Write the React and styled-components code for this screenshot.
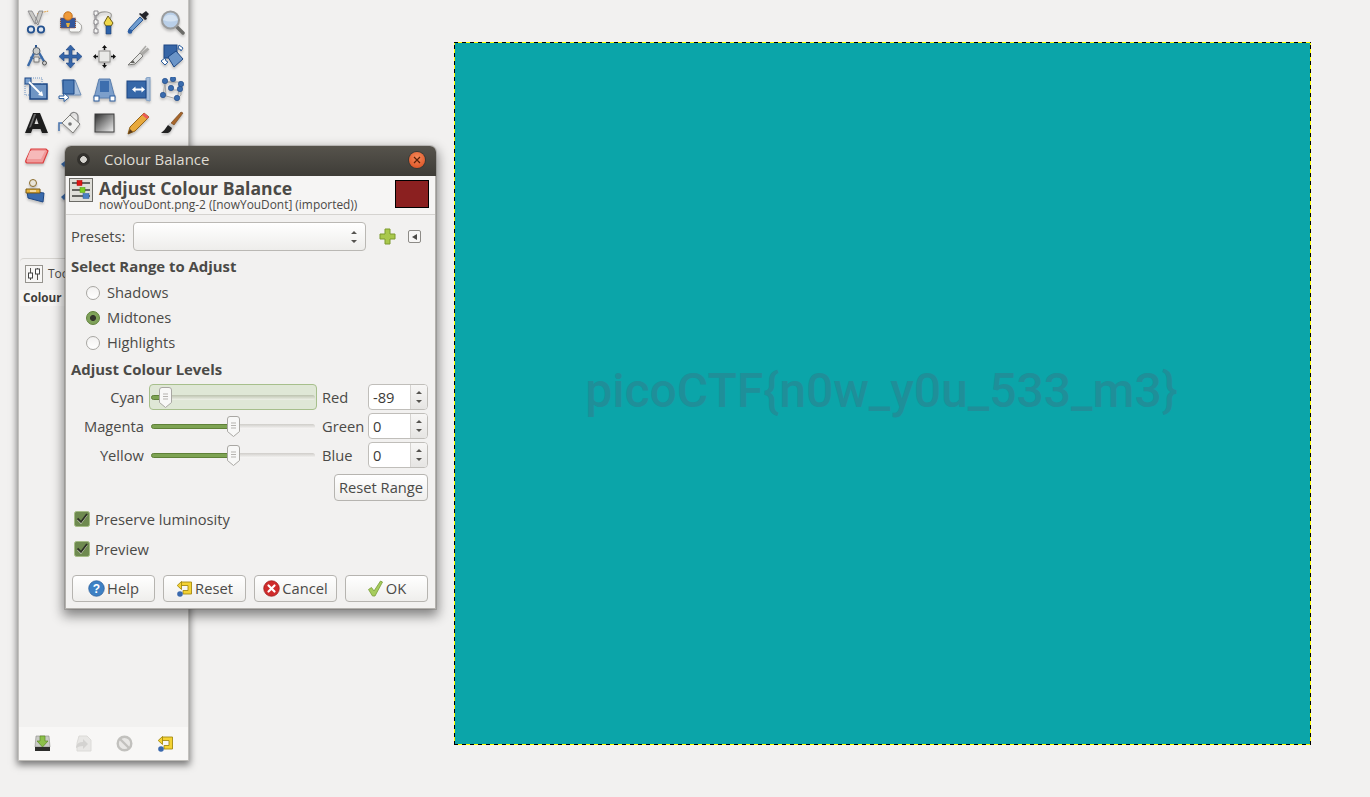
import React from 'react';
import styled, { createGlobalStyle } from 'styled-components';

const Global = createGlobalStyle`
  html, body { margin: 0; padding: 0; height: 100%; overflow: hidden; background: #f2f1f0; }
  #root { position: relative; width: 1370px; height: 797px; overflow: hidden; font-family: "Open Sans", "Noto Sans", sans-serif; color: #4b4a47; }
`;

const Desktop = styled.div`
  position: relative;
  width: 1370px;
  height: 797px;
  background: #f2f1f0;
`;

const Canvas = styled.div`
  position: absolute;
  left: 454px;
  top: 42px;
  width: 857px;
  height: 703px;
  display: flex;
  align-items: center;
  justify-content: center;
  background:
    repeating-linear-gradient(90deg, #000 0 4px, #ff0 4px 8px) top left / 100% 1px no-repeat,
    repeating-linear-gradient(90deg, #000 0 4px, #ff0 4px 8px) bottom left / 100% 1px no-repeat,
    repeating-linear-gradient(0deg, #000 0 4px, #ff0 4px 8px) top left / 1px 100% no-repeat,
    repeating-linear-gradient(0deg, #000 0 4px, #ff0 4px 8px) top right / 1px 100% no-repeat,
    #0ba5a9;
`;

const Flag = styled.div`
  font-family: Roboto, "Liberation Sans", sans-serif;
  font-size: 48px;
  font-weight: 500;
  color: #1f8f99;
  white-space: nowrap;
  margin: 0 0 6px -2px;
`;

/* ---------- Toolbox ---------- */
const Toolbox = styled.div`
  position: absolute;
  left: 18px;
  top: -10px;
  width: 171px;
  height: 771px;
  display: flex;
  flex-direction: column;
  background: #f2f1f0;
  border-left: 1px solid #c4c2bf;
  border-right: 1px solid #c4c2bf;
  border-bottom: 1px solid #bdbbb7;
  box-sizing: border-box;
  box-shadow: 0 3px 7px 1px rgba(0, 0, 0, 0.5);
`;

const ToolGrid = styled.div`
  display: grid;
  grid-template-columns: repeat(5, 34px);
  grid-auto-rows: 33.6px;
  padding-top: 16px;
  height: 268px;
  box-sizing: border-box;
`;

const ToolCell = styled.div`
  display: flex;
  align-items: center;
  justify-content: center;
  svg {
    width: 25px;
    height: 25px;
    display: block;
    filter: drop-shadow(0 2px 1px rgba(0, 0, 0, 0.2));
  }
`;

const TabPanel = styled.div`
  flex: 1;
  display: flex;
  flex-direction: column;
  margin-left: 1px;
  background: #f2f1f0;
`;

const Tab = styled.div`
  height: 32px;
  display: flex;
  align-items: center;
  gap: 5px;
  padding: 0 5px 2px;
  box-sizing: border-box;
  border-top: 1px solid #d5d3cf;
  border-top-left-radius: 4px;
  font-size: 12px;
  white-space: nowrap;
  overflow: hidden;
`;

const TabIcon = styled.div`
  width: 18px;
  height: 18px;
  flex: none;
  svg { width: 18px; height: 18px; display: block; }
`;

const PanelTitle = styled.div`
  height: 16px;
  line-height: 15px;
  padding-left: 3px;
  font-size: 11.7px;
  font-weight: 700;
  white-space: nowrap;
  background: #f7f6f5;
  color: #3f3e3b;
`;

const PanelFill = styled.div`
  flex: 1;
`;

const BottomBar = styled.div`
  height: 33px;
  display: grid;
  grid-template-columns: repeat(4, 41px);
  padding-left: 3px;
  align-items: center;
  justify-items: center;
  background: #f8f7f6;
  svg { width: 17px; height: 17px; display: block; }
`;

/* ---------- Dialog ---------- */
const Dialog = styled.div`
  position: absolute;
  left: 65px;
  top: 146px;
  width: 371px;
  height: 463px;
  box-sizing: border-box;
  display: flex;
  flex-direction: column;
  background: #f2f1f0;
  border-radius: 6px 6px 0 0;
  box-shadow: 0 0 0 1px rgba(90, 88, 84, 0.25), 0 5px 12px 2px rgba(0, 0, 0, 0.45);
`;

const TitleBar = styled.div`
  height: 30px;
  flex: none;
  box-sizing: border-box;
  display: flex;
  align-items: center;
  padding: 0 11px 3px 12px;
  border-radius: 6px 6px 0 0;
  background: linear-gradient(#56534c, #3e3c37);
`;

const WindowDot = styled.span`
  width: 13px;
  height: 13px;
  border-radius: 50%;
  background: radial-gradient(circle, #d5d3ce 0 3px, #33312d 3.6px 100%);
`;

const WindowTitle = styled.span`
  margin: 0 0 2px 14px;
  flex: 1;
  font-size: 15px;
  color: #dfdbd2;
`;

const CloseButton = styled.span`
  width: 16px;
  height: 16px;
  border-radius: 50%;
  background: radial-gradient(circle at 50% 35%, #f58a5a, #d94a1c);
  box-shadow: 0 0 0 1px #3a3833;
  display: flex;
  align-items: center;
  justify-content: center;
  svg { width: 8px; height: 8px; display: block; }
`;

const Inner = styled.div`
  flex: 1;
  display: flex;
  flex-direction: column;
  border: solid #b3b1ad;
  border-width: 0 1px 1px;
`;

const Header = styled.div`
  height: 39px;
  flex: none;
  box-sizing: border-box;
  display: grid;
  grid-template-columns: 24px 1fr 34px;
  column-gap: 6px;
  padding: 2px 6px 0 3px;
  background: #f6f5f4;
  border-bottom: 1px solid #d5d3d0;
`;

const HeaderIcon = styled.div`
  svg { width: 24px; height: 24px; display: block; }
`;

const HeaderText = styled.div`
  display: flex;
  flex-direction: column;
`;

const HeaderTitle = styled.div`
  font-size: 17.6px;
  line-height: 20px;
  font-weight: 700;
  color: #4b4a47;
  white-space: nowrap;
`;

const HeaderSub = styled.div`
  font-size: 11.9px;
  line-height: 13px;
  white-space: nowrap;
`;

const Swatch = styled.div`
  height: 28px;
  margin-top: 2px;
  box-sizing: border-box;
  background: #8b2020;
  border: 1px solid #000;
`;

const Body = styled.div`
  flex: 1;
  display: flex;
  flex-direction: column;
  padding: 7px 7px 6px 5px;
`;

const PresetRow = styled.div`
  height: 29px;
  display: flex;
  align-items: center;
  font-size: 14.7px;
`;

const PresetLabel = styled.span`
  width: 62px;
  margin-bottom: 2px;
`;

const Combo = styled.div`
  width: 233px;
  height: 29px;
  border: 1px solid #bab8b4;
  border-radius: 4px;
  background: linear-gradient(#fff, #eeedeb);
  display: flex;
  align-items: center;
  justify-content: flex-end;
  padding-right: 7px;
  box-sizing: border-box;
  svg { width: 8px; height: 14px; display: block; }
`;

const PlusIcon = styled.div`
  margin-left: 13px;
  svg { width: 17px; height: 17px; display: block; }
`;

const MenuArrow = styled.div`
  margin-left: 12px;
  width: 11px;
  height: 11px;
  border: 1px solid #8d8b87;
  border-radius: 2px;
  background: #f7f6f5;
  display: flex;
  align-items: center;
  justify-content: center;
  &::before {
    content: "";
    border-style: solid;
    border-width: 3px 5px 3px 0;
    border-color: transparent #4b4a47 transparent transparent;
  }
`;

const SectionTitle = styled.div`
  height: 18px;
  line-height: 16px;
  font-size: 14.9px;
  font-weight: 700;
  white-space: nowrap;
  margin-top: ${(p) => p.$top}px;
`;

const RadioList = styled.div`
  display: flex;
  flex-direction: column;
  margin: 4px 0 6px 15px;
`;

const RadioRow = styled.div`
  height: 25px;
  display: flex;
  align-items: center;
  font-size: 14.7px;
`;

const RowLabel = styled.span`
  margin-bottom: 2px;
`;

const RadioMark = styled.span`
  width: 14px;
  height: 14px;
  box-sizing: border-box;
  border-radius: 50%;
  margin-right: 7px;
  flex: none;
  border: 1px solid ${(p) => (p.$on ? '#5f8039' : '#a8a6a2')};
  background: ${(p) =>
    p.$on
      ? 'radial-gradient(circle, #33352c 0 2.6px, #7fa25a 3.4px 100%)'
      : 'linear-gradient(#f2f1f0, #fff)'};
`;

const ScaleGrid = styled.div`
  display: grid;
  grid-template-columns: 73px 168px 41px 60px;
  column-gap: 5px;
  grid-auto-rows: 26px;
  row-gap: 3px;
  margin-top: 5px;
`;

const ScaleRowName = styled.div`
  font-size: 14.7px;
  display: flex;
  align-items: center;
  justify-content: ${(p) => (p.$right ? 'flex-end' : 'flex-start')};
  white-space: nowrap;
`;

const Scale = styled.div`
  position: relative;
  box-sizing: border-box;
  border: 1px solid ${(p) => (p.$focus ? '#a7bf8c' : 'transparent')};
  border-radius: 4px;
  background: ${(p) => (p.$focus ? '#dfe7d6' : 'transparent')};
`;

const Trough = styled.div`
  position: absolute;
  left: 1px;
  right: 1px;
  top: 10px;
  height: 5px;
  border-radius: 3px;
  background: ${(p) => (p.$focus ? 'linear-gradient(#bcc2ae, #eef1e8)' : 'linear-gradient(#cfcdc9, #f8f7f6)')};
`;

const TroughFill = styled.div`
  height: 100%;
  box-sizing: border-box;
  border: 1px solid #5f8138;
  border-radius: 3px 0 0 3px;
  background: #7da352;
`;

const Handle = styled.div`
  position: absolute;
  top: 2px;
  width: 13px;
  height: 21px;
  svg { width: 13px; height: 21px; display: block; }
`;

const Spin = styled.div`
  display: flex;
  box-sizing: border-box;
  border: 1px solid #c0beba;
  border-radius: 4px;
  overflow: hidden;
  background: #fff;
`;

const SpinValue = styled.div`
  flex: 1;
  padding-left: 4px;
  font-size: 14.7px;
  line-height: 24px;
  color: #3c3b38;
`;

const SpinButtons = styled.div`
  width: 16px;
  display: flex;
  flex-direction: column;
  align-items: center;
  justify-content: center;
  gap: 6px;
  background: linear-gradient(#f7f6f5, #e6e5e3);
  border-left: 1px solid #d5d3d0;
`;

const SpinArrow = styled.span`
  border-style: solid;
  border-width: ${(p) => (p.$down ? '3px 3px 0' : '0 3px 3px')};
  border-color: ${(p) =>
    p.$down ? '#55534f transparent transparent' : 'transparent transparent #55534f'};
`;

const ResetRow = styled.div`
  display: flex;
  justify-content: flex-end;
  margin-top: 6px;
`;

const PushButton = styled.div`
  height: 27px;
  width: ${(p) => p.$w}px;
  box-sizing: border-box;
  border: 1px solid #b6b4b0;
  border-radius: 4px;
  background: linear-gradient(#fff, #efeeec);
  display: flex;
  align-items: center;
  justify-content: center;
  gap: 2px;
  font-size: 14.7px;
  white-space: nowrap;
  svg { width: 17px; height: 17px; display: block; flex: none; }
`;

const CheckRow = styled.div`
  height: 20px;
  margin-top: ${(p) => p.$top}px;
  margin-left: 3px;
  display: flex;
  align-items: center;
  font-size: 14.7px;
`;

const CheckMark = styled.div`
  width: 16px;
  height: 16px;
  margin-right: 5px;
  svg { width: 16px; height: 16px; display: block; }
`;

const ActionBar = styled.div`
  display: grid;
  grid-template-columns: repeat(4, 83px);
  column-gap: 8px;
  margin: 16px 0 0 1px;
`;

/* ---------- Icons ---------- */
const Scissors = () => (
  <svg viewBox="0 0 25 25">
    <path d="M13 4Q19 2 25 1" stroke="#d88a1c" strokeDasharray="1.500 1" fill="none" />
    <path d="M4 1l7 13 3-2L8 1zM19 1l-5 14-3-3 4-11z" fill="#c9c9c6" stroke="#77767a" strokeWidth=".7" />
    <circle cx="7" cy="19.500" r="3.200" fill="#dfe6f0" stroke="#23518f" strokeWidth="1.800" />
    <circle cx="17" cy="19.500" r="3.200" fill="#dfe6f0" stroke="#23518f" strokeWidth="1.800" />
  </svg>
);
const Foreground = () => (
  <svg viewBox="0 0 25 25">
    <path d="M14 14q1-4 4-3t4 3q2 0 1.500 4t-3 4H13q-3-1-1-5z" fill="#f7f7f6" stroke="#a9a8a5" />
    <rect x="2.500" y="8" width="15" height="10" fill="#34569b" stroke="#a0522d" strokeDasharray="1 1" />
    <circle cx="10" cy="6" r="4.200" fill="#ef9a3a" stroke="#c26f1c" />
    <path d="M8 13h4l-1 4H9z" fill="#e9b23c" />
  </svg>
);
const PathTool = () => (
  <svg viewBox="0 0 25 25">
    <path d="M5 5Q8 1 15 2t3 7" fill="none" stroke="#9c9b98" strokeWidth="1.200" />
    <path d="M2 1h4v4H4v5h2v4H4v5h2v4H2v-4h1v-5H2v-4h1V5H2z" fill="#f4f4f3" stroke="#76757a" strokeWidth=".8" />
    <path d="M16 6l-4 7 2 3h5l2-3z" fill="#f0d84a" stroke="#6b5c14" />
    <path d="M14 16h5v8h-5z" fill="#2d62a8" stroke="#1d3d70" strokeWidth=".6" />
  </svg>
);
const Eyedrop = () => (
  <svg viewBox="0 0 25 25">
    <path d="M20 1l3 3-3 3 1 2-2 1-6-6 1-1 2 1z" fill="#24242a" />
    <path d="M14 7l3 3L6 21l-3 1 0-3z" fill="#6e9ccf" stroke="#2d5a96" />
    <circle cx="4" cy="21.500" r="2.300" fill="#2c5ea4" />
  </svg>
);
const Zoom = () => (
  <svg viewBox="0 0 25 25">
    <path d="M16 16l7 7" stroke="#6b6b68" strokeWidth="3.500" strokeLinecap="round" />
    <circle cx="10.500" cy="10" r="8.500" fill="#b9cfe8" stroke="#9a9c9d" strokeWidth="2" />
    <path d="M3 10a8 8 0 0 1 15 0q-7 3-15 0z" fill="#d4e2f1" />
  </svg>
);
const Compass = () => (
  <svg viewBox="0 0 25 25">
    <path d="M12 1v4" stroke="#2c568f" strokeWidth="2" />
    <path d="M11 7L4 22M14 7l7 12" stroke="#3a6aa8" strokeWidth="2.400" fill="none" />
    <path d="M6 13q6 4 13 0" stroke="#3a6aa8" fill="none" />
    <circle cx="12.500" cy="7" r="3.500" fill="#c9cbc9" stroke="#54606e" />
    <rect x="10" y="13" width="5" height="5" fill="#e8e8e6" stroke="#555" strokeWidth=".7" />
    <circle cx="20.500" cy="19" r="2" fill="#ccc" stroke="#555" />
  </svg>
);
const Move = () => (
  <svg viewBox="0 0 25 25">
    <path d="M12.500 1l4.500 5h-3v5h5V8l5 4.500-5 4.500v-3h-5v5h3l-4.500 5-4.500-5h3v-5H6v3L1 12.500 6 8v3h5V6H8z" fill="#3565a8" stroke="#1e4380" strokeWidth=".6" />
  </svg>
);
const Align = () => (
  <svg viewBox="0 0 25 25">
    <rect x="7" y="7" width="11" height="11" fill="#e9e9e7" stroke="#8f8e8b" />
    <path d="M12.500 1l-2.500 3h5zM12.500 24l-2.500-3h5zM1 12.500l3-2.500v5zM24 12.500l-3-2.500v5z" fill="#111" />
    <path d="M12.500 3v3M12.500 19v3M3 12.500h3M19 12.500h3" stroke="#111" strokeWidth="1.400" />
  </svg>
);
const Knife = () => (
  <svg viewBox="0 0 25 25">
    <path d="M2 21L14 9l3 3-8 8z" fill="#e5e5e3" stroke="#7c7c79" />
    <path d="M4 19l3-3 2 3z" fill="#64635f" />
    <path d="M14 9l6-7M16 11l7-6M15 10l7-6" stroke="#aaa9a6" strokeWidth="1.500" />
  </svg>
);
const Rotate = () => (
  <svg viewBox="0 0 25 25">
    <rect x="4" y="1" width="13" height="13" fill="#3665a6" stroke="#1d4784" />
    <path d="M8 13l8-6 7 8-9 8z" fill="#6b95c8" stroke="#1d4784" />
    <path d="M19 1l4 3-2 3-1-2-2 0zM1 17l4-3 1 3 2 1-3 3z" fill="#fff" stroke="#2b5d9d" />
  </svg>
);
const ScaleIcon = () => (
  <svg viewBox="0 0 25 25">
    <rect x="6" y="7" width="17" height="15" fill="#6f95c4" stroke="#1d4784" strokeWidth="1.500" />
    <rect x="1" y="1" width="6" height="6" fill="#7aa1d0" stroke="#1d4784" />
    <path d="M7 1h11v6M1 7v11h5" fill="none" stroke="#6f95c4" strokeDasharray="1 1" />
    <path d="M5 5l13 13" stroke="#fff" strokeWidth="1.800" />
    <path d="M19 19l-5-1 4-4z" fill="#fff" />
  </svg>
);
const Shear = () => (
  <svg viewBox="0 0 25 25">
    <path d="M4 3h13l6 15H6z" fill="#a9c0dc" stroke="#6f8fb8" />
    <path d="M5 3h11v14H5z" fill="#4b7ab5" stroke="#1d4784" />
    <path d="M1 19h5v-3l5 4.500-5 4v-3H1z" fill="#fff" stroke="#2b5d9d" />
  </svg>
);
const Perspective = () => (
  <svg viewBox="0 0 25 25">
    <path d="M7 2h11l5 19H2z" fill="#7c9fcb" stroke="#5a7ead" />
    <rect x="8" y="4" width="9" height="11" fill="#3d6eae" />
    <rect x="2" y="19" width="5" height="5" fill="#fff" stroke="#2b5d9d" />
    <rect x="18" y="19" width="5" height="5" fill="#fff" stroke="#2b5d9d" />
  </svg>
);
const Flip = () => (
  <svg viewBox="0 0 25 25">
    <path d="M20 1l4-1v24l-4-1z" fill="#a8bfdc" stroke="#7f9ec3" />
    <rect x="1" y="4" width="19" height="17" fill="#3667a8" stroke="#1d4784" />
    <path d="M6 12.500l3.500-3v2h6v-2l3.500 3-3.500 3v-2h-6v2z" fill="#fff" />
  </svg>
);
const Cage = () => (
  <svg viewBox="0 0 25 25">
    <path d="M5 5h16l0 13-4 4-11-3zM5 5l-2 14M21 5l-4 17" fill="none" stroke="#a8a7a4" />
    <path d="M5 5h11M13 13H20" stroke="#a8a7a4" />
    {[[5, 4], [13, 2], [21, 7], [11, 11], [20, 12], [3, 18], [17, 21]].map(([x, y]) => (
      <circle key={`${x}-${y}`} cx={x} cy={y} r="2.700" fill="#3a6cae" stroke="#1d4784" strokeWidth=".6" />
    ))}
  </svg>
);
const LetterA = () => (
  <svg viewBox="0 0 25 25">
    <path d="M9 2h7l8 20h-6l-1.500-4h-8L7 22H1zM10.500 13h4L12.500 7z" fill="#1d1d1d" fillRule="evenodd" />
    <path d="M10 3h2l-5 13-2 1z" fill="#6a6a6a" />
  </svg>
);
const Bucket = () => (
  <svg viewBox="0 0 25 25">
    <path d="M12 5a4 4 0 0 1 8 1v7" fill="none" stroke="#888" strokeWidth="1.200" />
    <path d="M4 12l8-8 10 9-7 9z" fill="#f1f1ef" stroke="#7d7c79" />
    <circle cx="12" cy="13" r="1.800" fill="#777" />
    <path d="M4 12H1v8" fill="none" stroke="#4c76ad" strokeWidth="1.600" />
  </svg>
);
const Gradient = () => (
  <svg viewBox="0 0 25 25">
    <defs>
      <linearGradient id="grad" x1="0" x2="1" y1="0" y2="1">
        <stop offset="0" stopColor="#2d2d2d" />
        <stop offset="1" stopColor="#f4f4f4" />
      </linearGradient>
    </defs>
    <rect x="3" y="3" width="19" height="18" fill="url(#grad)" stroke="#3d3d3d" />
  </svg>
);
const Pencil = () => (
  <svg viewBox="0 0 25 25">
    <path d="M18 2l5 4L9 20l-7 3 2-7z" fill="#e8a93c" stroke="#95641a" />
    <path d="M18 2l5 4-2 2-5-4z" fill="#ec5a5a" />
    <path d="M2 23l2-5 3 3z" fill="#5a3b1a" />
  </svg>
);
const Brush = () => (
  <svg viewBox="0 0 25 25">
    <path d="M21 1l2 1-9 12-3-2z" fill="#a8662a" stroke="#6b3e14" strokeWidth=".6" />
    <path d="M10 12l4 3-2 2-4-3z" fill="#c8c8c6" />
    <path d="M8 14l4 3q-1 4-4 5H1q4-3 7-8z" fill="#222" />
  </svg>
);
const Eraser = () => (
  <svg viewBox="0 0 25 25">
    <path d="M7 4h15l2 2-5 12H3q-2-1-1-3z" fill="#f09a9a" stroke="#dc3c3c" strokeWidth="1.200" />
    <path d="M6 6h15l-4 8H3z" fill="#f6b9b9" />
  </svg>
);
const Airbrush = () => (
  <svg viewBox="0 0 25 25">
    <path d="M3 19L18 8l2 3L6 22z" fill="#3b6cae" />
  </svg>
);
const Clone = () => (
  <svg viewBox="0 0 25 25">
    <path d="M3 13l17 2-1 9-15-4z" fill="#3a6bad" stroke="#1d4784" />
    <circle cx="9" cy="5" r="3.500" fill="#e8e4d8" stroke="#8a6b2a" />
    <path d="M2 11h14v4H2z" fill="#e6b43e" stroke="#7a5a14" />
    <path d="M6 13h6" stroke="#fff" />
  </svg>
);
const Heal = () => (
  <svg viewBox="0 0 25 25">
    <path d="M3 19L18 6l3 3L6 22z" fill="#3b6cae" />
  </svg>
);

const TabGlyph = () => (
  <svg viewBox="0 0 18 18">
    <rect x=".5" y=".5" width="17" height="17" fill="#f7f6f5" stroke="#96948f" />
    <path d="M5.500 3v12M12.500 3v12" stroke="#55534f" />
    <rect x="3.500" y="8" width="4" height="5" fill="#fff" stroke="#444" />
    <rect x="10.500" y="4" width="4" height="5" fill="#fff" stroke="#444" />
  </svg>
);
const SaveIcon = () => (
  <svg viewBox="0 0 17 17">
    <path d="M2 1h13l1 11H1z" fill="#c9cac5" stroke="#8c8c88" strokeWidth=".6" />
    <rect x="1" y="12" width="15" height="4" fill="#2d2d2b" />
    <path d="M6 1h5v5h3l-5.500 6L3 6h3z" fill="#8cc04a" stroke="#5c8a26" strokeWidth=".7" />
  </svg>
);
const RestoreIcon = () => (
  <svg viewBox="0 0 17 17">
    <path d="M4 1h8l4 4v11H2V8z" fill="#e8e7e5" stroke="#dcdbd8" />
    <path d="M1 12q1-5 7-5V4l5 5-5 5v-3q-4 0-7 2z" fill="#d4d3d1" />
  </svg>
);
const DeleteIcon = () => (
  <svg viewBox="0 0 17 17">
    <circle cx="8.500" cy="8.500" r="6.800" fill="#e8e7e5" stroke="#c2c1be" strokeWidth="2.400" />
    <path d="M4 4l9 9" stroke="#c2c1be" strokeWidth="2.400" />
  </svg>
);
const ResetIcon = () => (
  <svg viewBox="0 0 17 17">
    <path d="M5 2h10.500v12H7V10.500h5V5.500H5" fill="#f4d233" stroke="#a58a12" strokeWidth=".9" />
    <path d="M1.200 5.500L5.500 1.500v8z" fill="#f4d233" stroke="#a58a12" strokeWidth=".9" />
    <circle cx="4" cy="14" r="2.800" fill="#3a69ae" />
  </svg>
);
const HelpIcon = () => (
  <svg viewBox="0 0 17 17">
    <circle cx="8.500" cy="8.500" r="7.800" fill="#3d80c4" stroke="#2a5c98" strokeWidth=".7" />
    <text x="8.500" y="13" textAnchor="middle" fontSize="12" fontWeight="700" fontFamily="Liberation Sans, sans-serif" fill="#fff">?</text>
  </svg>
);
const CancelIcon = () => (
  <svg viewBox="0 0 17 17">
    <circle cx="8.500" cy="8.500" r="7.800" fill="#cf2b2b" stroke="#9a1c1c" strokeWidth=".7" />
    <path d="M5.500 5.500l6 6M11.500 5.500l-6 6" stroke="#fff" strokeWidth="2.200" strokeLinecap="round" />
  </svg>
);
const OkIcon = () => (
  <svg viewBox="0 0 17 17">
    <path d="M1.500 9.500l3-2 2.500 3.500L13.500 1l2 1-7.500 14H5.500z" fill="#a6cc5c" stroke="#789c38" strokeWidth=".8" />
  </svg>
);
const BalanceIcon = () => (
  <svg viewBox="0 0 24 24">
    <rect x=".5" y=".5" width="23" height="23" fill="#dfded9" stroke="#6c6b66" />
    <path d="M3 5h18M3 12h18M3 18h18" stroke="#3d3d3a" strokeWidth="1.600" />
    <rect x="8" y="2.500" width="5" height="5" fill="#e01515" stroke="#a00" strokeWidth=".5" />
    <rect x="11" y="9.500" width="5" height="5" fill="#79d021" stroke="#4f9010" strokeWidth=".5" />
    <rect x="14" y="15.500" width="6" height="5" fill="#4a80c4" stroke="#2a5c98" strokeWidth=".5" />
  </svg>
);
const PlusGlyph = () => (
  <svg viewBox="0 0 17 17">
    <path d="M6 1h5v5h5v5h-5v5H6v-5H1V6h5z" fill="#a9c84c" stroke="#7c9a2e" />
  </svg>
);
const ComboArrows = () => (
  <svg viewBox="0 0 8 14">
    <path d="M4 1l3 3H1zM4 13l3-3H1z" fill="#55534f" />
  </svg>
);
const CloseX = () => (
  <svg viewBox="0 0 8 8">
    <path d="M1 1l6 6M7 1L1 7" stroke="#5a2008" strokeWidth="1.200" />
  </svg>
);
const HandleShape = () => (
  <svg viewBox="0 0 13 21">
    <path d="M3 .5h7A2.500 2.500 0 0 1 12.500 3v12.500L6.500 20.500.5 15.500V3A2.500 2.500 0 0 1 3 .5z" fill="#f8f8f7" stroke="#a9a7a3" />
    <path d="M4 7h5M4 9.500h5M4 12h5" stroke="#b5b3af" />
  </svg>
);
const CheckGlyph = () => (
  <svg viewBox="0 0 16 16">
    <rect x=".5" y=".5" width="15" height="15" rx="2" fill="#6f8a50" stroke="#a5bd85" />
    <path d="M3.500 8.500l3.500 3.500 6-8" fill="none" stroke="#f0f3e8" strokeWidth="1.200" />
    <path d="M3.500 7.500l3.500 3.500 6-8" fill="none" stroke="#2d3125" strokeWidth="1.800" />
  </svg>
);

const tools = [Scissors, Foreground, PathTool, Eyedrop, Zoom, Compass, Move, Align, Knife, Rotate, ScaleIcon, Shear, Perspective, Flip, Cage, LetterA, Bucket, Gradient, Pencil, Brush, Eraser, Airbrush, () => null, () => null, () => null, Clone, Heal];
const scales = [
  { l: 'Cyan', r: 'Red', v: '-89', pos: 16, focus: true },
  { l: 'Magenta', r: 'Green', v: '0', pos: 84 },
  { l: 'Yellow', r: 'Blue', v: '0', pos: 84 },
];
const actions = [
  { Icon: HelpIcon, t: 'Help' },
  { Icon: ResetIcon, t: 'Reset' },
  { Icon: CancelIcon, t: 'Cancel' },
  { Icon: OkIcon, t: 'OK' },
];

export default function App() {
  return (
    <Desktop>
      <Global />
      <Canvas>
        <Flag>picoCTF{'{'}n0w_y0u_533_m3{'}'}</Flag>
      </Canvas>
      <Toolbox>
        <ToolGrid>
          {tools.map((T, i) => (
            <ToolCell key={i}><T /></ToolCell>
          ))}
        </ToolGrid>
        <TabPanel>
          <Tab><TabIcon><TabGlyph /></TabIcon>Tool Options</Tab>
          <PanelTitle>Colour Balance</PanelTitle>
          <PanelFill />
        </TabPanel>
        <BottomBar>
          <SaveIcon /><RestoreIcon /><DeleteIcon /><ResetIcon />
        </BottomBar>
      </Toolbox>
      <Dialog>
        <TitleBar>
          <WindowDot />
          <WindowTitle>Colour Balance</WindowTitle>
          <CloseButton><CloseX /></CloseButton>
        </TitleBar>
        <Inner>
          <Header>
            <HeaderIcon><BalanceIcon /></HeaderIcon>
            <HeaderText>
              <HeaderTitle>Adjust Colour Balance</HeaderTitle>
              <HeaderSub>nowYouDont.png-2 ([nowYouDont] (imported))</HeaderSub>
            </HeaderText>
            <Swatch />
          </Header>
          <Body>
            <PresetRow>
              <PresetLabel>Presets:</PresetLabel>
              <Combo><ComboArrows /></Combo>
              <PlusIcon><PlusGlyph /></PlusIcon>
              <MenuArrow />
            </PresetRow>
            <SectionTitle $top={7}>Select Range to Adjust</SectionTitle>
            <RadioList>
              <RadioRow><RadioMark /><RowLabel>Shadows</RowLabel></RadioRow>
              <RadioRow><RadioMark $on /><RowLabel>Midtones</RowLabel></RadioRow>
              <RadioRow><RadioMark /><RowLabel>Highlights</RowLabel></RadioRow>
            </RadioList>
            <SectionTitle $top={0}>Adjust Colour Levels</SectionTitle>
            <ScaleGrid>
              {scales.map((s) => (
                <React.Fragment key={s.l}>
                  <ScaleRowName $right>{s.l}</ScaleRowName>
                  <Scale $focus={s.focus}>
                    <Trough $focus={s.focus}>
                      <TroughFill style={{ width: s.pos - 2 }} />
                    </Trough>
                    <Handle style={{ left: s.pos - 7.5 }}><HandleShape /></Handle>
                  </Scale>
                  <ScaleRowName>{s.r}</ScaleRowName>
                  <Spin>
                    <SpinValue>{s.v}</SpinValue>
                    <SpinButtons><SpinArrow /><SpinArrow $down /></SpinButtons>
                  </Spin>
                </React.Fragment>
              ))}
            </ScaleGrid>
            <ResetRow><PushButton $w={94}><RowLabel>Reset Range</RowLabel></PushButton></ResetRow>
            <CheckRow $top={8}><CheckMark><CheckGlyph /></CheckMark>Preserve luminosity</CheckRow>
            <CheckRow $top={10}><CheckMark><CheckGlyph /></CheckMark>Preview</CheckRow>
            <ActionBar>
              {actions.map(({ Icon, t }) => (
                <PushButton $w={83} key={t}><Icon /><RowLabel>{t}</RowLabel></PushButton>
              ))}
            </ActionBar>
          </Body>
        </Inner>
      </Dialog>
    </Desktop>
  );
}
